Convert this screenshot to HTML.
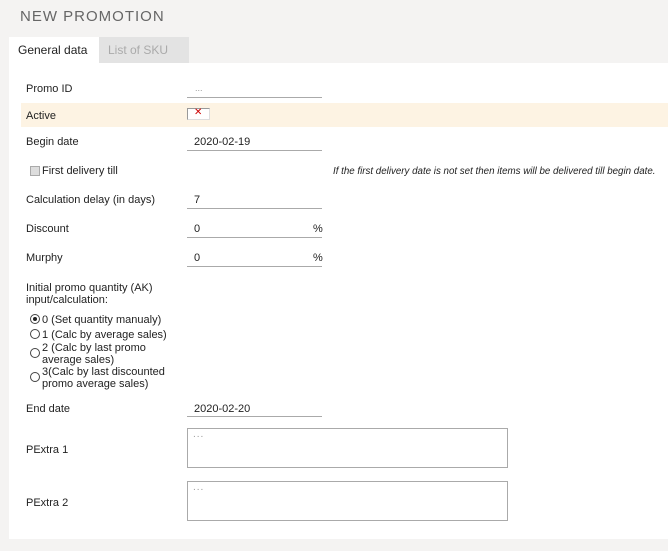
<!DOCTYPE html>
<html><head><meta charset="utf-8"><style>
*{margin:0;padding:0;box-sizing:border-box}
body{width:668px;height:551px;background:#f4f3f2;font-family:"Liberation Sans",Arial,sans-serif;font-size:11px;color:#222;position:relative;overflow:hidden}
.a{position:absolute;white-space:nowrap}
.t{margin-top:1px}
.ln{position:absolute;height:1px;background:#aaa;left:187px;width:135px}
.ta{position:absolute;left:187px;width:321px;height:40px;border:1px solid #aaa;background:#fff}
.ta span{position:absolute;left:5px;top:0;color:#999;font-size:10px;letter-spacing:1px}
.r{position:absolute;left:30px;width:10px;height:10px;border:1px solid #444;border-radius:50%;background:#fff}
</style></head><body>
<div class="a" style="left:20px;top:8px;font-size:15px;letter-spacing:1px;color:#666">NEW PROMOTION</div>
<div class="a" style="left:9px;top:37px;width:90px;height:26px;background:#fff"></div>
<div class="a" style="left:18px;top:43px;font-size:12px;color:#222">General data</div>
<div class="a" style="left:99px;top:37px;width:90px;height:26px;background:#e3e3e3"></div>
<div class="a" style="left:108px;top:43px;font-size:12px;color:#aaa">List of SKU</div>
<div class="a" style="left:9px;top:63px;width:659px;height:476px;background:#fff"></div>
<div class="a" style="left:21px;top:103px;width:647px;height:24px;background:#fdf3e3"></div>

<div class="a" style="left:26px;top:83px">Promo ID</div>
<div class="a" style="left:195px;top:83px;color:#999;font-size:9px">...</div>
<div class="ln" style="top:97px"></div>

<div class="a" style="left:26px;top:110px">Active</div>
<div class="a" style="left:187px;top:108px;width:23px;height:12px;background:#fff;border:1px solid #999;border-right-color:#ddd;border-bottom-color:#ddd"></div>
<div class="a" style="left:194px;top:107px;color:#c00;font-size:10px">✕</div>

<div class="a" style="left:26px;top:136px">Begin date</div>
<div class="a" style="left:194px;top:136px">2020-02-19</div>
<div class="ln" style="top:150px"></div>

<div class="a" style="left:30px;top:166px;width:10px;height:10px;background:#ddd;border:1px solid #aaa"></div>
<div class="a" style="left:42px;top:165px">First delivery till</div>
<div class="a" style="left:333px;top:166px;font-style:italic;font-size:9.75px">If the first delivery date is not set then items will be delivered till begin date.</div>

<div class="a" style="left:26px;top:194px">Calculation delay (in days)</div>
<div class="a" style="left:194px;top:194px">7</div>
<div class="ln" style="top:208px"></div>

<div class="a" style="left:26px;top:223px">Discount</div>
<div class="a" style="left:194px;top:223px">0</div>
<div class="a" style="left:313px;top:223px">%</div>
<div class="ln" style="top:237px"></div>

<div class="a" style="left:26px;top:252px">Murphy</div>
<div class="a" style="left:194px;top:252px">0</div>
<div class="a" style="left:313px;top:252px">%</div>
<div class="ln" style="top:266px"></div>

<div class="a" style="left:26px;top:282px;line-height:12px">Initial promo quantity (AK)<br>input/calculation:</div>
<div class="r" style="top:314px"></div><div class="a" style="left:33px;top:317px;width:4px;height:4px;border-radius:50%;background:#222"></div>
<div class="a" style="left:42px;top:314px">0 (Set quantity manualy)</div>
<div class="r" style="top:329px"></div>
<div class="a" style="left:42px;top:329px">1 (Calc by average sales)</div>
<div class="r" style="top:348px"></div>
<div class="a" style="left:42px;top:342px;line-height:12px">2 (Calc by last promo<br>average sales)</div>
<div class="r" style="top:372px"></div>
<div class="a" style="left:42px;top:366px;line-height:12px">3(Calc by last discounted<br>promo average sales)</div>

<div class="a" style="left:26px;top:403px">End date</div>
<div class="a" style="left:194px;top:403px">2020-02-20</div>
<div class="ln" style="top:416px"></div>

<div class="a" style="left:26px;top:444px">PExtra 1</div>
<div class="ta" style="top:428px"><span>...</span></div>
<div class="a" style="left:26px;top:497px">PExtra 2</div>
<div class="ta" style="top:481px"><span>...</span></div>
</body></html>
